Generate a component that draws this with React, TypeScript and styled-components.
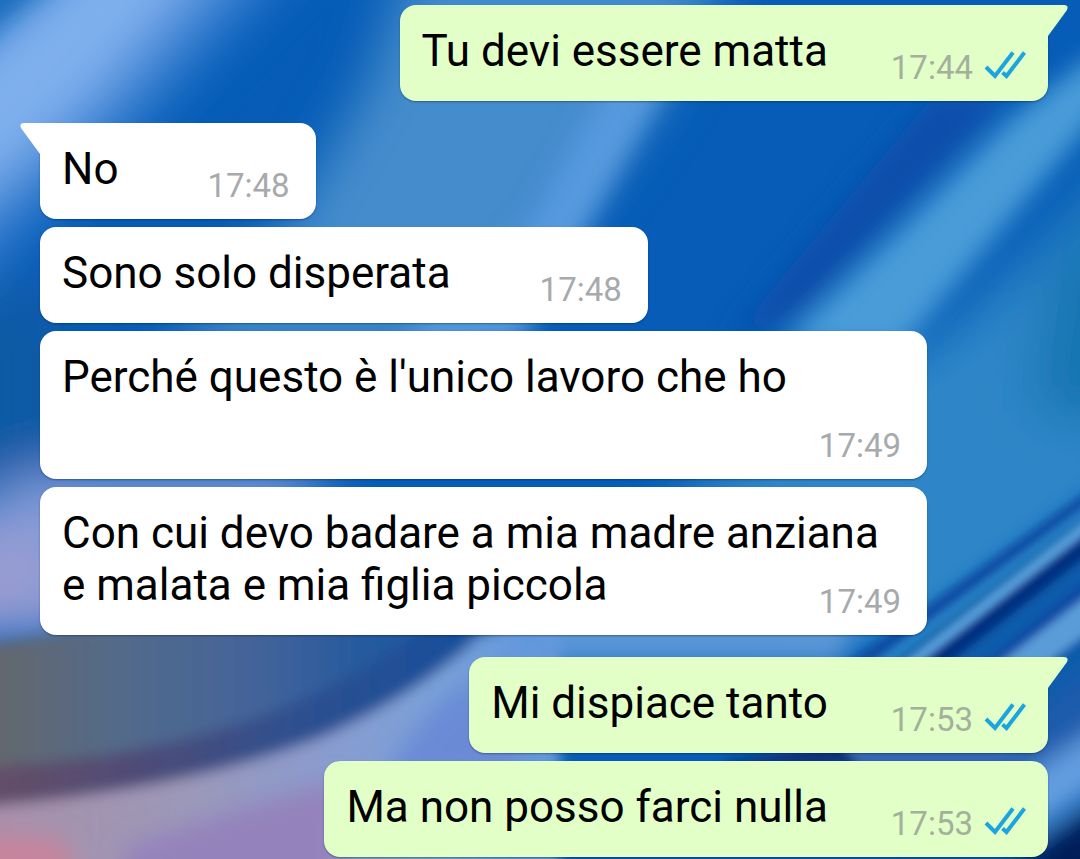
import React from "react";
import styled, { createGlobalStyle } from "styled-components";

const GlobalStyle = createGlobalStyle`
  * { box-sizing: border-box; }
  body { margin: 0; background: #0a5cb5; font-family: Roboto, "Liberation Sans", sans-serif; }
`;

const Page = styled.div`
  position: relative;
  min-height: 100vh;
  overflow: hidden;
`;

const WallpaperArt = styled.svg`
  position: absolute;
  inset: 0;
  width: 100%;
  height: 100%;
`;

const Conversation = styled.main`
  position: relative;
  display: flex;
  flex-direction: column;
  gap: 22px;
  padding: 5px 32px 2px 40px;
`;

const Group = styled.section<{ $outgoing?: boolean }>`
  display: flex;
  flex-direction: column;
  align-items: ${(p) => (p.$outgoing ? "flex-end" : "flex-start")};
  gap: 8px;
`;

const Bubble = styled.article<{ $outgoing?: boolean; $tail?: boolean }>`
  position: relative;
  display: flow-root;
  max-width: 88%;
  padding: 20px 22px 7px;
  border-radius: ${(p) =>
    !p.$tail ? "16px" : p.$outgoing ? "16px 0 16px 16px" : "0 16px 16px 16px"};
  background: ${(p) => (p.$outgoing ? "#e1ffc7" : "#ffffff")};
  box-shadow: 0 1px 2px rgba(0, 20, 60, 0.4);
  color: #000;
  font-size: 44px;
  line-height: 52px;
`;

const Tail = styled.svg<{ $outgoing?: boolean }>`
  position: absolute;
  top: 0;
  ${(p) => (p.$outgoing ? "left: 100%; transform: scaleX(-1);" : "right: 100%;")}
  width: 20px;
  height: 31px;
`;

const Stamp = styled.span<{ $outgoing?: boolean }>`
  float: right;
  display: flex;
  align-items: center;
  gap: 11px;
  margin: 17px 0 0 ${(p) => (p.$outgoing ? "63px" : "89px")};
  padding-right: ${(p) => (p.$outgoing ? "0" : "4px")};
  color: ${(p) => (p.$outgoing ? "#a4b09c" : "#a6aaad")};
  font-size: 33px;
  line-height: 52px;
`;

const Ticks = styled.svg`
  width: 42px;
  height: 30px;
  margin-bottom: 6px;
`;

type Message = { text: string; time: string };
type Thread = { outgoing: boolean; messages: Message[] };

const threads: Thread[] = [
  { outgoing: true, messages: [{ text: "Tu devi essere matta", time: "17:44" }] },
  {
    outgoing: false,
    messages: [
      { text: "No", time: "17:48" },
      { text: "Sono solo disperata", time: "17:48" },
      { text: "Perché questo è l'unico lavoro che ho", time: "17:49" },
      { text: "Con cui devo badare a mia madre anziana e malata e mia figlia piccola", time: "17:49" },
    ],
  },
  {
    outgoing: true,
    messages: [
      { text: "Mi dispiace tanto", time: "17:53" },
      { text: "Ma non posso farci nulla", time: "17:53" },
    ],
  },
];

function Wallpaper() {
  return (
    <WallpaperArt viewBox="0 0 1080 859" preserveAspectRatio="xMidYMid slice" aria-hidden="true">
      <defs>
        <filter id="soft" x="-50%" y="-50%" width="200%" height="200%"><feGaussianBlur stdDeviation="26" /></filter>
        <filter id="mid" x="-50%" y="-50%" width="200%" height="200%"><feGaussianBlur stdDeviation="12" /></filter>
        <filter id="edge" x="-20%" y="-20%" width="140%" height="140%"><feGaussianBlur stdDeviation="7" /></filter>
        <filter id="fine" x="-50%" y="-50%" width="200%" height="200%"><feGaussianBlur stdDeviation="4" /></filter>
        <linearGradient id="shade" gradientUnits="userSpaceOnUse" x1="0" y1="0" x2="480" y2="0">
          <stop offset="0" stopColor="#63686e" />
          <stop offset="0.25" stopColor="#536a8a" />
          <stop offset="0.55" stopColor="#42639a" />
          <stop offset="0.75" stopColor="#265a9e" />
          <stop offset="1" stopColor="#1c5aa4" />
        </linearGradient>
        <linearGradient id="fold" gradientUnits="userSpaceOnUse" x1="0" y1="0" x2="480" y2="0">
          <stop offset="0" stopColor="#644e68" />
          <stop offset="0.3" stopColor="#4e4c78" />
          <stop offset="0.6" stopColor="#30508e" />
          <stop offset="1" stopColor="#15509c" />
        </linearGradient>
        <linearGradient id="sheen" gradientUnits="userSpaceOnUse" x1="0" y1="0" x2="520" y2="0">
          <stop offset="0" stopColor="#a890aa" />
          <stop offset="0.35" stopColor="#9c98b8" />
          <stop offset="0.65" stopColor="#889cd0" />
          <stop offset="0.85" stopColor="#7aa2d8" />
          <stop offset="1" stopColor="#6498dc" />
        </linearGradient>
      </defs>
      <rect width="1080" height="859" fill="#065cb6" />
      <g filter="url(#soft)">
        <path d="M-60 70 L90 -60 L240 -60 L100 100 L-60 250 Z" fill="#80b0ee" />
        <path d="M250 -60 L110 100 L-60 270 L-60 310 L150 110 L310 -60 Z" fill="#3a84d6" />
        <path d="M410 -40 L370 80 L290 220 L160 350 L480 350 L640 120 L740 -40 Z" fill="#448ccc" />
        <path d="M-60 310 L60 280 L60 480 L-60 480 Z" fill="#115aa4" />
        <path d="M1140 150 L950 330 L700 480 L640 540 L900 660 L1140 480 Z" fill="#2e86c8" />
        <path d="M1140 190 L1050 270 L1030 410 L1140 430 Z" fill="#1474b2" />
        <path d="M-60 520 L40 470 L340 470 L260 560 L80 636 L-60 640 Z" fill="#7c9ad8" />
        <path d="M-60 540 L50 520 L60 630 L-60 640 Z" fill="#989cd2" />
      </g>
      <g filter="url(#mid)">
        <path d="M-40 50 L60 -30 L-40 -30 Z" fill="#1c6ebe" />
        <path d="M620 60 L680 60 L590 220 L520 340 L400 340 L530 220 Z" fill="#569ade" />
        <path d="M780 345 L900 230 L1010 120 L1100 50 L1110 100 L900 350 Z" fill="#4a9cd8" />
        <path d="M730 340 L930 100 L1000 100 L800 310 Z" fill="#0b4eaa" />
        <path d="M480 600 L870 600 L840 665 L480 665 Z" fill="#5a96d6" />
      </g>
      <g filter="url(#edge)">
        <path d="M-30 646 Q80 634 140 610 L500 610 L470 660 L330 740 L-30 790 Z" fill="url(#shade)" />
        <path d="M-30 768 Q180 756 300 700 Q390 662 440 610 L520 610 L440 680 L330 740 Q180 800 -30 806 Z" fill="url(#fold)" />
        <path d="M-30 808 Q180 792 320 738 Q420 694 480 636 L560 610 L560 900 L-30 900 Z" fill="url(#sheen)" />
      </g>
      <g filter="url(#mid)">
        <path d="M400 750 L440 700 L520 660 L520 780 L380 790 Z" fill="#6a8ad6" />
        <path d="M270 800 L340 780 L340 900 L110 900 L130 845 Z" fill="#9482bc" />
        <path d="M-30 836 L60 838 L90 900 L-30 900 Z" fill="#c8849c" />
      </g>
      <g filter="url(#fine)">
        <path d="M880 650 L1100 495 L1100 1000 L820 800 Z" fill="#0b5cac" />
        <path d="M840 668 L1100 482 L1100 496 L840 688 Z" fill="#0a4ea4" />
        <path d="M840 688 L1100 496 L1100 504 L840 700 Z" fill="#2a86cc" />
        <path d="M840 700 L1100 504 L1100 512 L840 712 Z" fill="#0a68aa" />
        <path d="M840 714 L1100 511 L1100 521 L840 724 Z" fill="#64ace8" />
        <path d="M840 726 L1100 523 L1100 546 L840 748 Z" fill="#052e80" />
        <path d="M950 690 L1100 568 L1100 584 L970 690 Z" fill="#0d4ca4" />
        <path d="M965 690 L1100 586 L1100 624 L1010 690 Z" fill="#5a9cd8" />
        <path d="M730 760 L840 745 L860 765 L720 765 Z" fill="#0b3278" />
        <path d="M840 745 L1040 745 L1040 765 L860 765 Z" fill="#3468b4" />
      </g>
      <g filter="url(#mid)">
        <path d="M1020 720 L1110 650 L1110 730 L1020 790 Z" fill="#1c5cac" />
        <path d="M1020 780 L1110 720 L1110 778 L1020 840 Z" fill="#639ee0" />
        <path d="M1020 860 L1110 795 L1110 900 L1020 900 Z" fill="#061e58" />
      </g>
    </WallpaperArt>
  );
}

function MessageBubble({ message, outgoing, tail }: { message: Message; outgoing: boolean; tail: boolean }) {
  return (
    <Bubble $outgoing={outgoing} $tail={tail}>
      {tail && (
        <Tail $outgoing={outgoing} viewBox="0 0 20 31" aria-hidden="true">
          <path d="M20 0 H4 Q-1 0 1 5 L20 31 Z" fill={outgoing ? "#e1ffc7" : "#ffffff"} />
        </Tail>
      )}
      {message.text}
      <Stamp $outgoing={outgoing}>
        <time>{message.time}</time>
        {outgoing && (
          <Ticks viewBox="0 0 42 30" role="img" aria-label="Letto">
            <path
              d="M2 17 L11 26 L29 2.5 M18.5 22.5 L22.5 26 L40.5 2.5"
              fill="none"
              stroke="#1ba5e0"
              strokeWidth="4"
            />
          </Ticks>
        )}
      </Stamp>
    </Bubble>
  );
}

export default function App() {
  return (
    <Page>
      <GlobalStyle />
      <Wallpaper />
      <Conversation>
        {threads.map((thread, t) => (
          <Group key={t} $outgoing={thread.outgoing}>
            {thread.messages.map((message, m) => (
              <MessageBubble key={m} message={message} outgoing={thread.outgoing} tail={m === 0} />
            ))}
          </Group>
        ))}
      </Conversation>
    </Page>
  );
}
